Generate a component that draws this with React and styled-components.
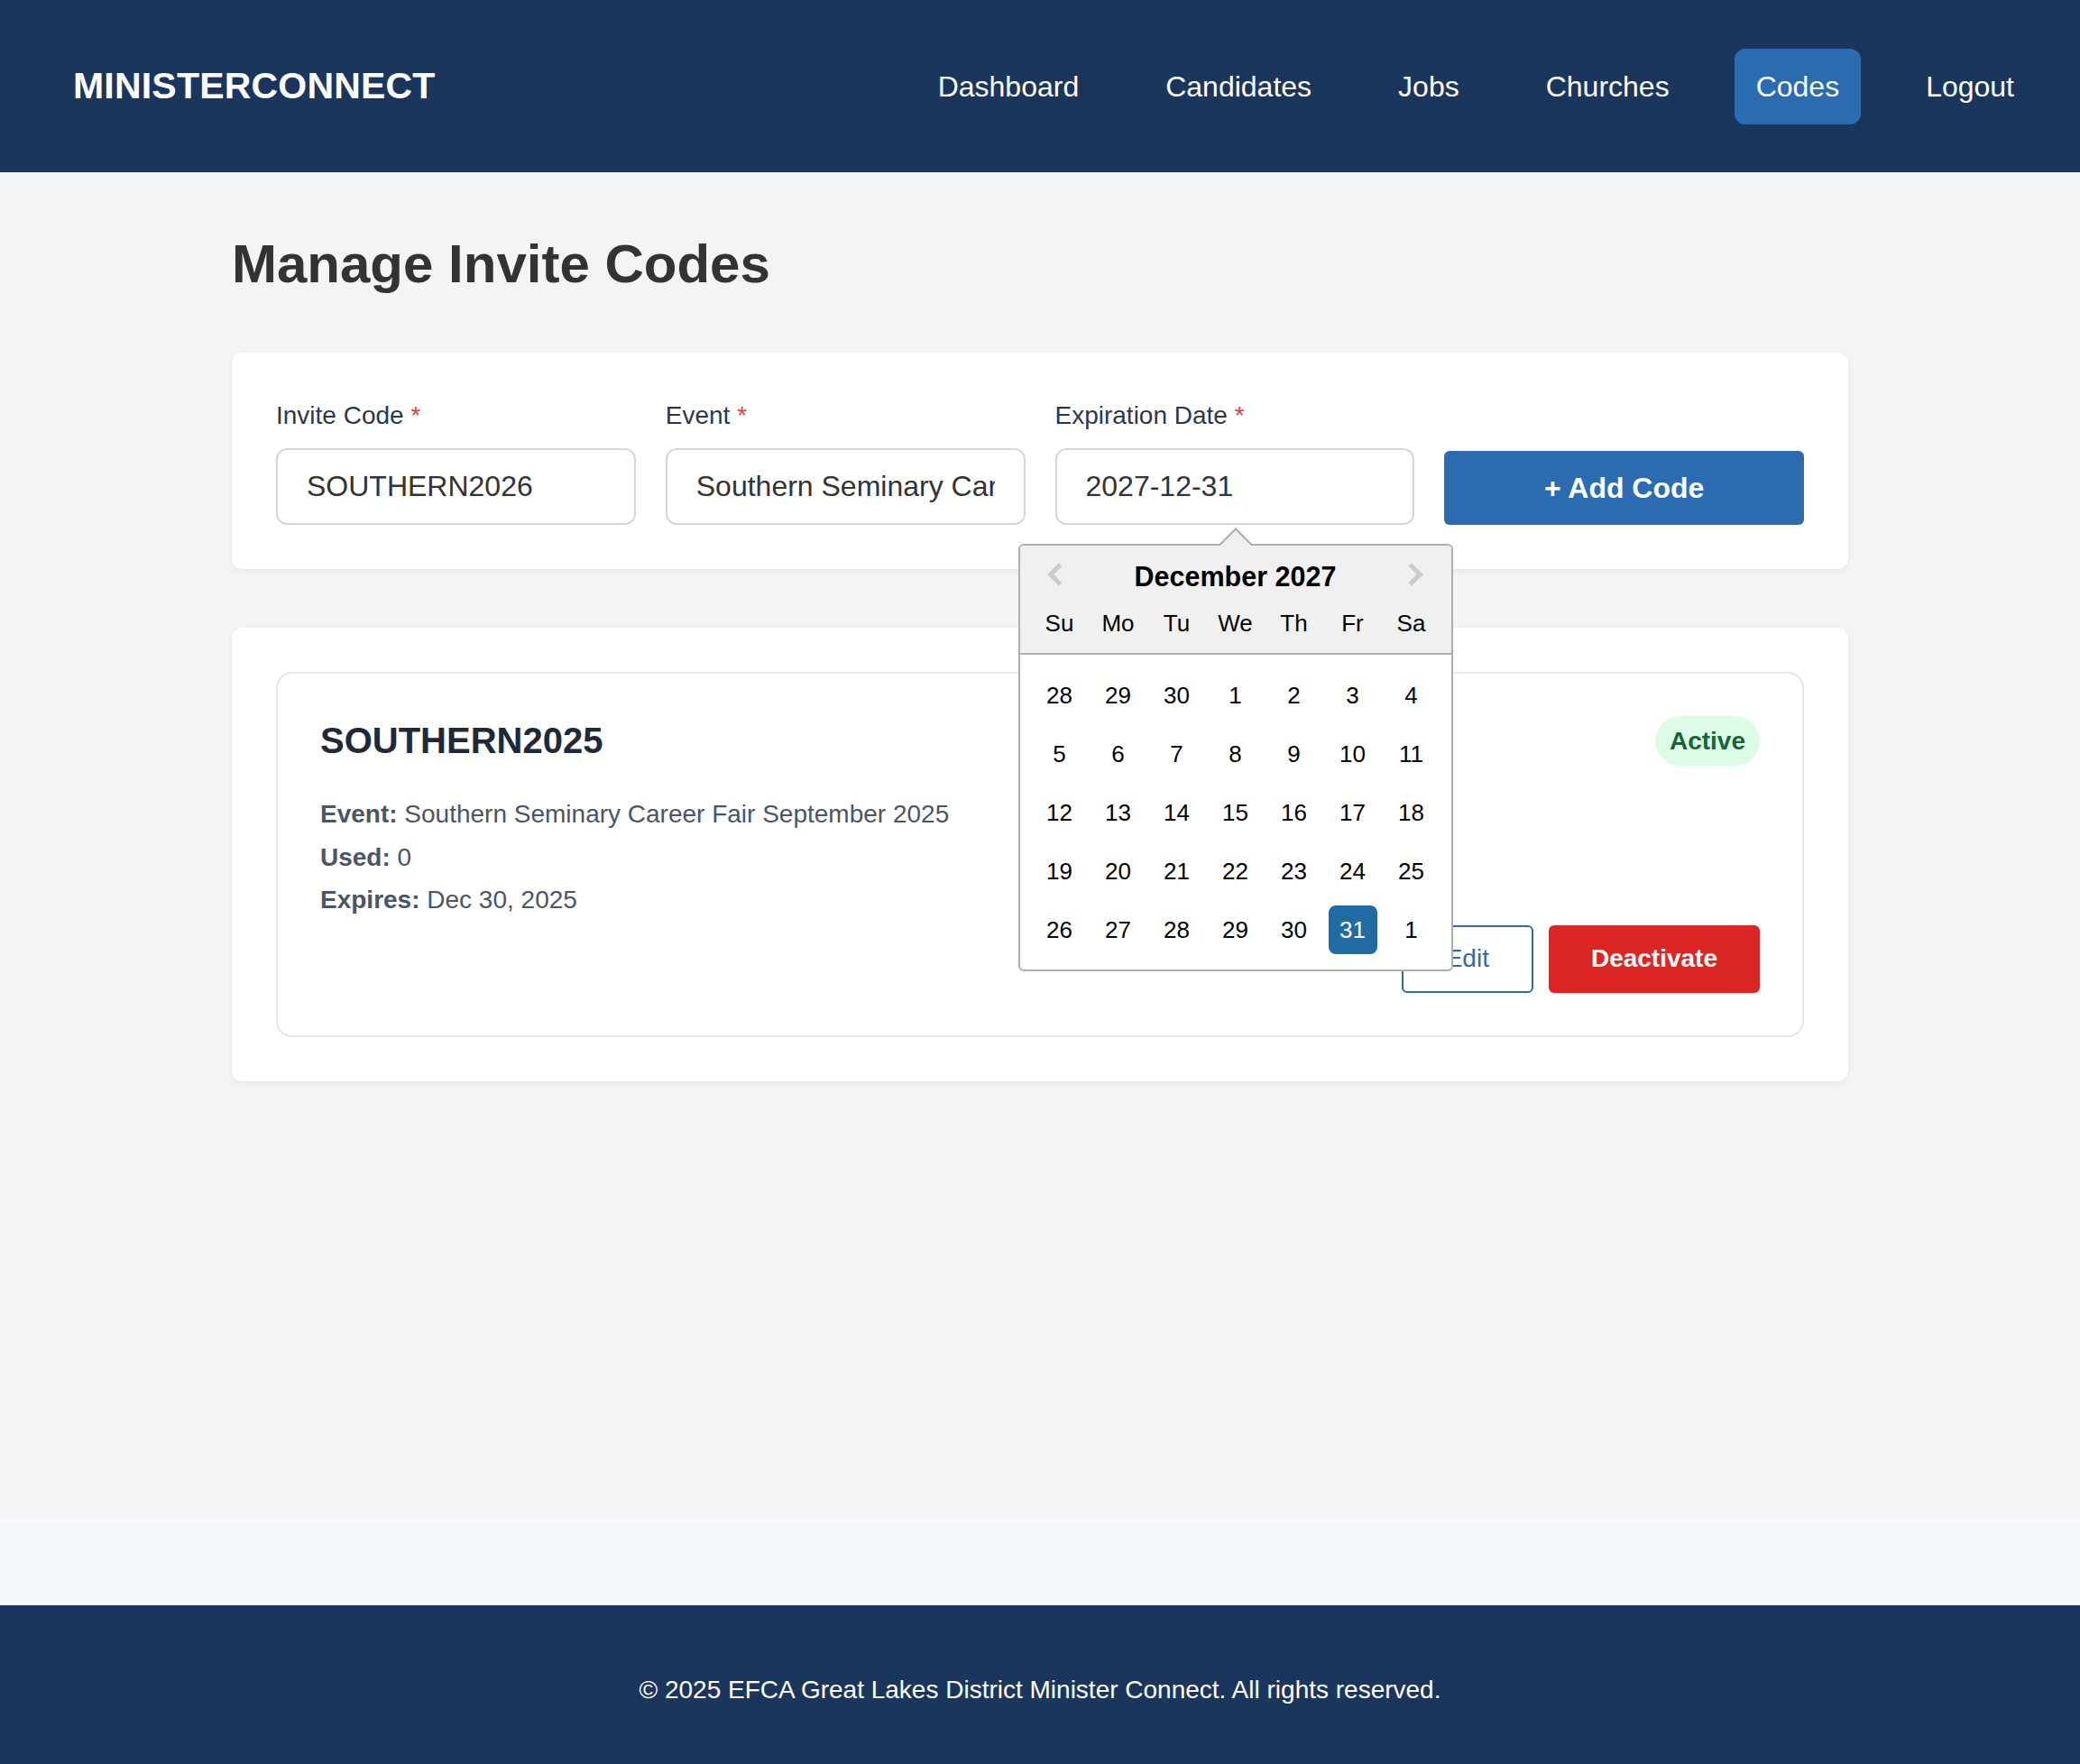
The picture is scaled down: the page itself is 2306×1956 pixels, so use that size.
import React from 'react'
import styled, { createGlobalStyle } from 'styled-components'

const GlobalStyle = createGlobalStyle`
  * { box-sizing: border-box; }
  body {
    margin: 0;
    font-family: "Liberation Sans", Arial, Helvetica, sans-serif;
    background: #f5f9fc;
  }
`

const Page = styled.div`
  display: flex;
  flex-direction: column;
  min-height: 100vh;
`

const NavBar = styled.header`
  height: 191px;
  background: #1b365d;
  display: flex;
  align-items: center;
  justify-content: space-between;
  padding: 0 49px 0 81px;
`

const Logo = styled.div`
  color: #fff;
  font-size: 41px;
  font-weight: 700;
  letter-spacing: 0.2px;
`

const NavLinks = styled.nav`
  display: flex;
  align-items: center;
  gap: 48px;
`

const NavLink = styled.a`
  color: #fff;
  font-size: 32px;
  line-height: 36px;
  padding: 24px;
  border-radius: 12px;
  text-decoration: none;
  ${props => props.$active && `background: #2b6cb0;`}
`

const Main = styled.main`
  min-height: 1493px;
  background: #f3f4f6;
  padding-top: 67px;
`

const Container = styled.div`
  width: 1792px;
  margin: 0 auto;
`

const Title = styled.h1`
  margin: 0 0 64px;
  font-size: 60px;
  line-height: 69px;
  font-weight: 700;
  color: #333;
`

const Card = styled.section`
  background: #fff;
  border-radius: 12px;
  box-shadow: 0 2px 6px rgba(0, 0, 0, 0.06);
  padding: ${props => (props.$form ? '52px 49px 49px' : '49px')};
  & + & { margin-top: 65px; }
`

const FormGrid = styled.div`
  display: grid;
  grid-template-columns: repeat(4, 1fr);
  column-gap: 33px;
  align-items: end;
`

const Field = styled.div`
  position: relative;
  display: flex;
  flex-direction: column;
`

const Label = styled.label`
  font-size: 28px;
  line-height: 36px;
  color: #2d3748;
  margin-bottom: 18px;
`

const Req = styled.span`
  color: #e53e3e;
`

const Input = styled.input`
  height: 85px;
  width: 100%;
  border: 2px solid #d4d7dc;
  border-radius: 12px;
  padding: 0 32px;
  font-family: inherit;
  font-size: 32px;
  color: #333;
  background: #fff;
  outline: none;
`

const AddButton = styled.button`
  height: 82px;
  border: none;
  border-radius: 6px;
  background: #2b6cb0;
  color: #fff;
  font-family: inherit;
  font-size: 32px;
  font-weight: 700;
`

const Picker = styled.div`
  position: absolute;
  top: calc(100% + 21px);
  left: -41px;
  width: 482px;
  z-index: 10;
  background: #fff;
  border: 2px solid #aeaeae;
  border-radius: 6px;

  &::before,
  &::after {
    content: "";
    position: absolute;
    left: 221px;
    border-left: 18px solid transparent;
    border-right: 18px solid transparent;
  }
  &::before {
    top: -20px;
    border-bottom: 18px solid #aeaeae;
  }
  &::after {
    top: -17px;
    border-bottom: 18px solid #f0f0f0;
  }
`

const PickerHead = styled.div`
  background: #f0f0f0;
  border-bottom: 2px solid #aeaeae;
  border-radius: 4px 4px 0 0;
  padding-top: 16.5px;
`

const MonthRow = styled.div`
  display: flex;
  align-items: center;
  justify-content: space-between;
  padding: 0 34px;
  height: 35px;
`

const MonthName = styled.div`
  font-size: 30.5px;
  font-weight: 700;
  color: #000;
`

const Chevron = styled.span`
  display: block;
  width: 18px;
  height: 18px;
  margin-top: -5px;
  border-style: solid;
  border-color: #ccc;
  border-width: 5px 5px 0 0;
  transform: rotate(${props => (props.$dir === 'prev' ? '-135deg' : '45deg')});
`

const DayGrid = styled.div`
  display: grid;
  grid-template-columns: repeat(7, 65px);
  grid-auto-rows: 65px;
  place-items: center;
  padding: ${props => (props.$head ? '0 11.5px' : '13px 11.5px 11.5px')};
  margin-top: ${props => (props.$head ? '2px' : '0')};
`

const Day = styled.div`
  width: 54px;
  height: 54px;
  display: flex;
  align-items: center;
  justify-content: center;
  font-size: 26px;
  color: #000;
  border-radius: 8px;
  ${props => props.$selected && `
    background: #216ba5;
    color: #fff;
  `}
`

const CodeCard = styled.div`
  border: 2px solid #e5e7eb;
  border-radius: 18px;
  padding: 47px;
`

const CodeTop = styled.div`
  display: flex;
  align-items: center;
  justify-content: space-between;
`

const CodeName = styled.h3`
  margin: 0;
  font-size: 40px;
  font-weight: 700;
  color: #1f2937;
`

const Badge = styled.span`
  background: #dcfce7;
  color: #166534;
  font-size: 28px;
  line-height: 33px;
  font-weight: 700;
  padding: 11px 16px;
  border-radius: 999px;
`

const Details = styled.div`
  margin-top: 30px;
`

const Detail = styled.p`
  margin: 0;
  font-size: 28px;
  line-height: 47.5px;
  color: #4a5568;
`

const Actions = styled.div`
  display: flex;
  justify-content: flex-end;
  gap: 17px;
  margin-top: 4px;
`

const ActionButton = styled.button`
  height: 75px;
  padding: 0 47px;
  border-radius: 6px;
  font-family: inherit;
  font-size: 28px;
  ${props => props.$danger ? `
    border: none;
    background: #dc2626;
    color: #fff;
    font-weight: 700;
  ` : `
    border: 2px solid #2b6cb0;
    background: #fff;
    color: #2b6cb0;
  `}
`

const Footer = styled.footer`
  margin-top: auto;
  height: 176px;
  padding-top: 12px;
  background: #1b365d;
  color: #fff;
  font-size: 28px;
  display: flex;
  align-items: center;
  justify-content: center;
`

const links = ['Dashboard', 'Candidates', 'Jobs', 'Churches', 'Codes', 'Logout']
const weekdays = ['Su', 'Mo', 'Tu', 'We', 'Th', 'Fr', 'Sa']
const days = [
  28, 29, 30, 1, 2, 3, 4,
  5, 6, 7, 8, 9, 10, 11,
  12, 13, 14, 15, 16, 17, 18,
  19, 20, 21, 22, 23, 24, 25,
  26, 27, 28, 29, 30, 31, 1,
]

const DatePicker = () => (
  <Picker>
    <PickerHead>
      <MonthRow>
        <Chevron $dir="prev" />
        <MonthName>December 2027</MonthName>
        <Chevron $dir="next" />
      </MonthRow>
      <DayGrid $head>
        {weekdays.map(d => <Day key={d}>{d}</Day>)}
      </DayGrid>
    </PickerHead>
    <DayGrid>
      {days.map((d, i) => (
        <Day key={i} $selected={i === 33}>{d}</Day>
      ))}
    </DayGrid>
  </Picker>
)

const App = () => (
  <Page>
    <GlobalStyle />
    <NavBar>
      <Logo>MINISTERCONNECT</Logo>
      <NavLinks>
        {links.map(l => (
          <NavLink key={l} $active={l === 'Codes'}>{l}</NavLink>
        ))}
      </NavLinks>
    </NavBar>
    <Main>
      <Container>
        <Title>Manage Invite Codes</Title>
        <Card $form>
          <FormGrid>
            <Field>
              <Label>Invite Code <Req>*</Req></Label>
              <Input readOnly value="SOUTHERN2026" />
            </Field>
            <Field>
              <Label>Event <Req>*</Req></Label>
              <Input readOnly value="Southern Seminary Career Fair September 2025" />
            </Field>
            <Field>
              <Label>Expiration Date <Req>*</Req></Label>
              <Input readOnly value="2027-12-31" />
              <DatePicker />
            </Field>
            <AddButton>+ Add Code</AddButton>
          </FormGrid>
        </Card>
        <Card>
          <CodeCard>
            <CodeTop>
              <CodeName>SOUTHERN2025</CodeName>
              <Badge>Active</Badge>
            </CodeTop>
            <Details>
              <Detail><strong>Event:</strong> Southern Seminary Career Fair September 2025</Detail>
              <Detail><strong>Used:</strong> 0</Detail>
              <Detail><strong>Expires:</strong> Dec 30, 2025</Detail>
            </Details>
            <Actions>
              <ActionButton>Edit</ActionButton>
              <ActionButton $danger>Deactivate</ActionButton>
            </Actions>
          </CodeCard>
        </Card>
      </Container>
    </Main>
    <Footer>© 2025 EFCA Great Lakes District Minister Connect. All rights reserved.</Footer>
  </Page>
)

export default App
